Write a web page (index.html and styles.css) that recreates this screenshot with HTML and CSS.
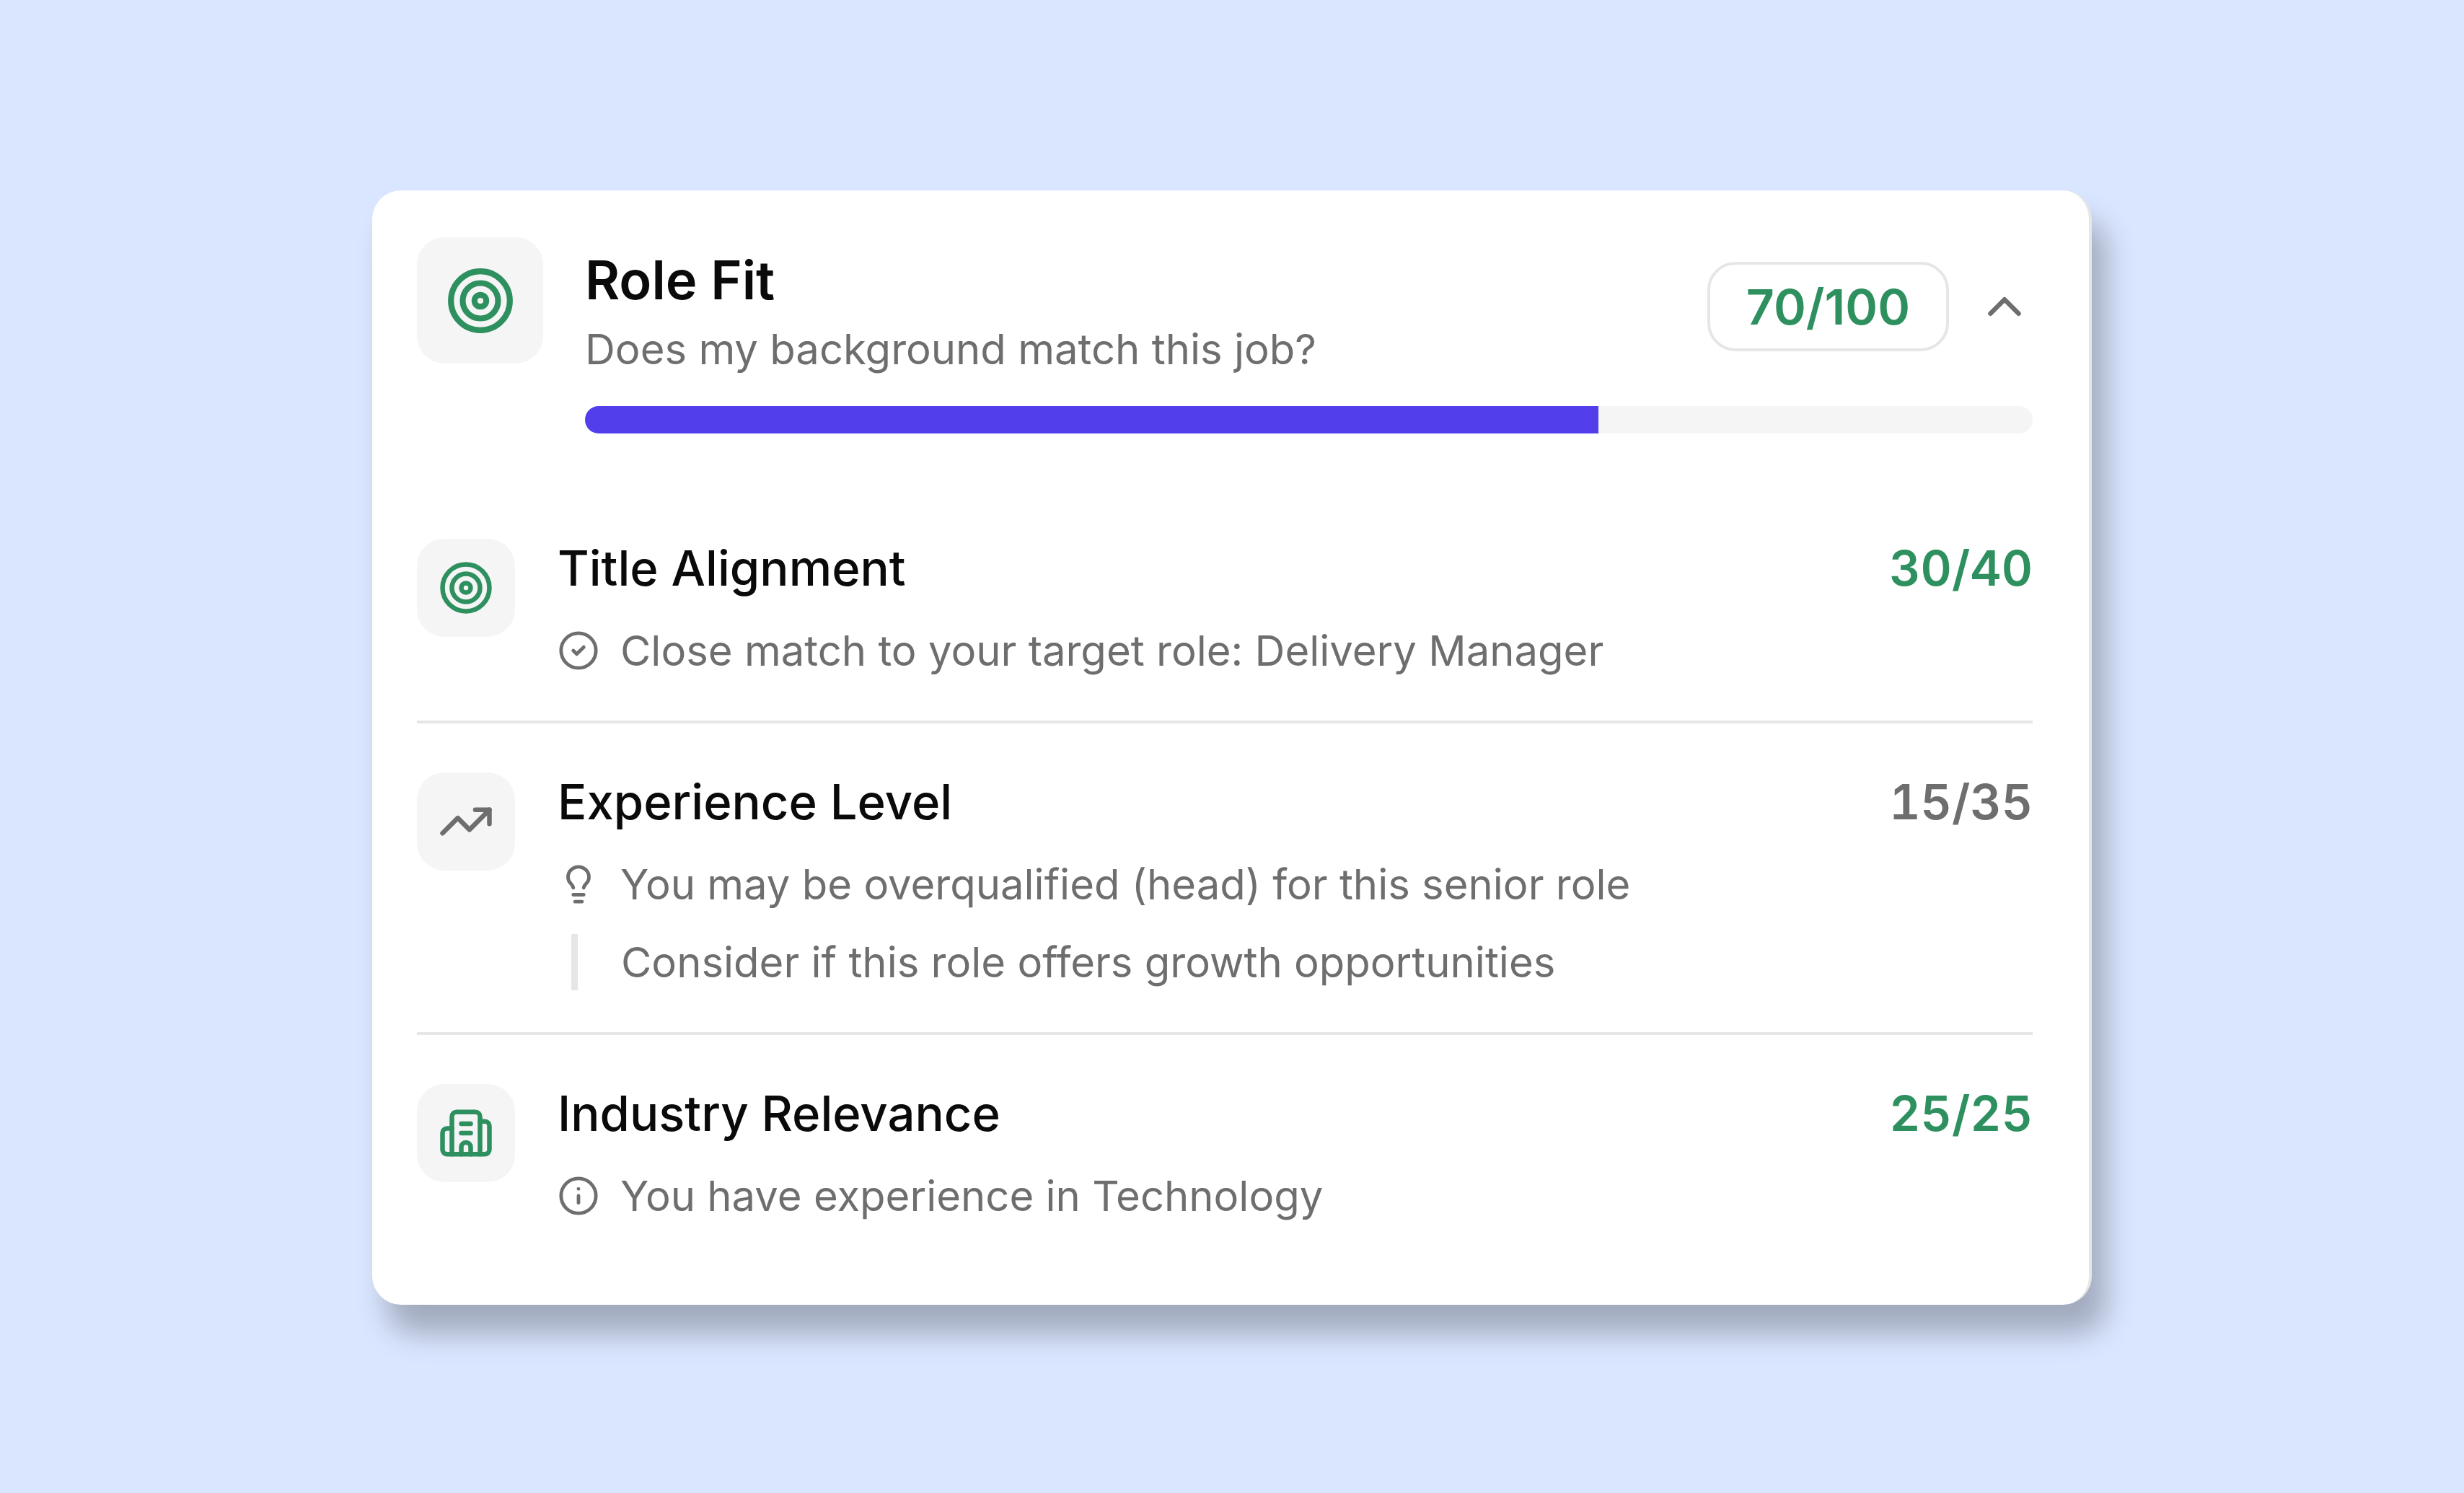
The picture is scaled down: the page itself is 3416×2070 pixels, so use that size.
FILE: index.html
```html
<!DOCTYPE html>
<html lang="en">
<head>
    <meta charset="UTF-8">
    <meta name="viewport" content="width=device-width, initial-scale=1.0">
    <title>Role Fit</title>
    <link rel="stylesheet" href="styles.css">
</head>
<body>
    <main class="card">
        <header class="card-header">
            <div class="tile tile-large green">
                <svg class="icon-large" viewBox="0 0 24 24" aria-hidden="true">
                    <circle cx="12" cy="12" r="10"/>
                    <circle cx="12" cy="12" r="6"/>
                    <circle cx="12" cy="12" r="2"/>
                </svg>
            </div>
            <div class="header-body">
                <div class="header-top">
                    <div class="header-text">
                        <h1>Role Fit</h1>
                        <p class="subtitle">Does my background match this job?</p>
                    </div>
                    <span class="score-pill green">70/100</span>
                    <button class="toggle" type="button" aria-label="Collapse" aria-expanded="true" aria-controls="criteria">
                        <svg class="icon" viewBox="0 0 24 24" aria-hidden="true">
                            <path d="m18 15-6-6-6 6"/>
                        </svg>
                    </button>
                </div>
                <div class="progress" role="progressbar" aria-label="Role Fit" aria-valuenow="70" aria-valuemin="0" aria-valuemax="100">
                    <div class="progress-fill" style="width: 70%"></div>
                </div>
            </div>
        </header>

        <ul class="criteria" id="criteria">
            <li class="criterion">
                <div class="tile green">
                    <svg class="icon" viewBox="0 0 24 24" aria-hidden="true">
                        <circle cx="12" cy="12" r="10"/>
                        <circle cx="12" cy="12" r="6"/>
                        <circle cx="12" cy="12" r="2"/>
                    </svg>
                </div>
                <div class="criterion-body">
                    <div class="criterion-head">
                        <h2>Title Alignment</h2>
                        <span class="score green">30/40</span>
                    </div>
                    <p class="detail">
                        <svg class="icon-small" viewBox="0 0 24 24" aria-hidden="true">
                            <circle cx="12" cy="12" r="10"/>
                            <path d="m9 12 2 2 4-4"/>
                        </svg>
                        Close match to your target role: Delivery Manager
                    </p>
                </div>
            </li>

            <li class="criterion">
                <div class="tile">
                    <svg class="icon" viewBox="0 0 24 24" aria-hidden="true">
                        <path d="M16 7h6v6"/>
                        <path d="m22 7-8.5 8.5-5-5L2 17"/>
                    </svg>
                </div>
                <div class="criterion-body">
                    <div class="criterion-head">
                        <h2>Experience Level</h2>
                        <span class="score">15/35</span>
                    </div>
                    <p class="detail">
                        <svg class="icon-small" viewBox="0 0 24 24" aria-hidden="true">
                            <path d="M15 14c.2-1 .7-1.7 1.5-2.5 1-.9 1.5-2.2 1.5-3.5A6 6 0 0 0 6 8c0 1 .2 2.2 1.5 3.5.7.7 1.3 1.5 1.5 2.5"/>
                            <path d="M9 18h6"/>
                            <path d="M10 22h4"/>
                        </svg>
                        You may be overqualified (head) for this senior role
                    </p>
                    <p class="tip">Consider if this role offers growth opportunities</p>
                </div>
            </li>

            <li class="criterion">
                <div class="tile green">
                    <svg class="icon" viewBox="0 0 24 24" aria-hidden="true">
                        <path d="M10 12h4"/>
                        <path d="M10 8h4"/>
                        <path d="M14 21v-3a2 2 0 0 0-4 0v3"/>
                        <path d="M6 10H4a2 2 0 0 0-2 2v7a2 2 0 0 0 2 2h16a2 2 0 0 0 2-2V9a2 2 0 0 0-2-2h-2"/>
                        <path d="M6 21V5a2 2 0 0 1 2-2h8a2 2 0 0 1 2 2v16"/>
                    </svg>
                </div>
                <div class="criterion-body">
                    <div class="criterion-head">
                        <h2>Industry Relevance</h2>
                        <span class="score green">25/25</span>
                    </div>
                    <p class="detail">
                        <svg class="icon-small" viewBox="0 0 24 24" aria-hidden="true">
                            <circle cx="12" cy="12" r="10"/>
                            <path d="M12 16v-4"/>
                            <path d="M12 8h.01"/>
                        </svg>
                        You have experience in Technology
                    </p>
                </div>
            </li>
        </ul>
    </main>
</body>
</html>
```

FILE: styles.css
```css
* {
    box-sizing: border-box;
    margin: 0;
    padding: 0;
}

body {
    min-height: 100vh;
    padding: 264px 516px 0;
    background: #dae6ff;
    color: #6e6e6e;
    font-family: Inter, "Liberation Sans", sans-serif;
    font-size: 58px;
    line-height: 78px;
}

.card {
    padding: 65px 78px 112px 62px;
    background: #fff;
    border-right: 4px solid #e5e7e6;
    border-radius: 40px;
    box-shadow: 20px 40px 40px rgba(0, 0, 0, 0.26);
}

svg {
    display: block;
    flex-shrink: 0;
    fill: none;
    stroke: currentColor;
    stroke-width: 2;
    stroke-linecap: round;
    stroke-linejoin: round;
}

.icon-large {
    width: 98px;
    height: 98px;
}

.icon {
    width: 78px;
    height: 78px;
}

.icon-small {
    width: 58px;
    height: 58px;
}

.tile {
    display: flex;
    flex-shrink: 0;
    align-items: center;
    justify-content: center;
    width: 136px;
    height: 136px;
    background: #f5f5f5;
    border-radius: 38px;
}

.tile-large {
    width: 175px;
    height: 175px;
}

.green {
    color: #2e905f;
}

/* Header */
.card-header {
    display: flex;
    gap: 58px;
}

.header-body {
    flex: 1;
}

.header-top {
    display: flex;
    align-items: center;
    gap: 38px;
}

.header-text {
    flex: 1;
}

h1 {
    color: #0a0a0a;
    font-size: 74px;
    font-weight: 600;
    line-height: 118px;
}

.subtitle {
    line-height: 74px;
}

.score-pill {
    padding: 19px 50px;
    border: 4px solid #e6e6e6;
    border-radius: 39px;
    font-size: 68px;
    font-weight: 600;
}

.toggle {
    background: none;
    border: none;
    color: inherit;
    cursor: pointer;
}

.progress {
    height: 38px;
    margin-top: 42px;
    overflow: hidden;
    background: #f5f5f5;
    border-radius: 19px;
}

.progress-fill {
    height: 100%;
    background: #533eeb;
}

/* Criteria list */
.criteria {
    margin-top: 78px;
    list-style: none;
}

.criterion {
    display: flex;
    gap: 59px;
    padding: 68px 0 58px;
    border-bottom: 4px solid #e6e6e6;
}

.criterion:last-child {
    padding-bottom: 0;
    border-bottom: none;
}

.criterion-body {
    flex: 1;
}

.criterion-head {
    display: flex;
    justify-content: space-between;
    margin-bottom: 34px;
    font-size: 67px;
    line-height: 82px;
}

h2 {
    color: #0a0a0a;
    font-size: inherit;
    font-weight: 500;
}

.score {
    font-weight: 600;
    font-variant-numeric: tabular-nums;
}

.detail {
    display: flex;
    align-items: center;
    gap: 29px;
}

/* Vertical rule sits under the icon of the line above */
.tip {
    margin: 30px 0 0 19px;
    padding-left: 60px;
    border-left: 9px solid #e6e6e6;
}
```
